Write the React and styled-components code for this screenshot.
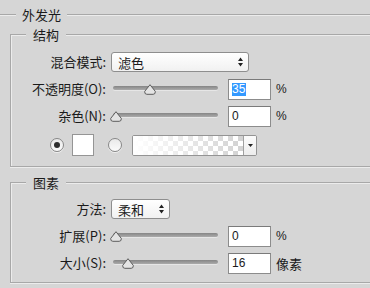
import styled, { createGlobalStyle } from "styled-components";

const BG = "#d6d6d6";
const DARK_LINE = "#a8a8a8";
const LIGHT_LINE = "#ececec";

const GlobalStyle = createGlobalStyle`
    html, body {
        margin: 0;
        padding: 0;
        background: ${BG};
        overflow: hidden;
    }
    #root {
        width: 370px;
        height: 288px;
        overflow: hidden;
        font-family: "Noto Sans CJK SC", "Liberation Sans", sans-serif;
        color: #1a1a1a;
    }
`;

// outer group: its left and bottom edges lie outside the window
const OuterGroup = styled.fieldset`
    margin: 6px 0 0 -2px;
    padding: 3px 0 40px 11px;
    width: 440px;
    min-width: 0;
    border: 1px solid ${DARK_LINE};
    box-shadow: inset 1px 1px 0 ${LIGHT_LINE};
`;

const Group = styled.fieldset`
    margin: ${(p) => p.$top || 0}px 0 0 0;
    padding: 0;
    width: 420px;
    min-width: 0;
    border: 1px solid ${DARK_LINE};
    box-shadow: inset 1px 1px 0 ${LIGHT_LINE}, 0 1px 0 ${LIGHT_LINE};
`;

const Rows = styled.div`
    display: flex;
    flex-direction: column;
    gap: 7px;
    padding: ${(p) => p.$padTop}px 0 ${(p) => p.$padBottom}px 0;
`;

const Legend = styled.legend`
    margin-left: ${(p) => p.$offset}px;
    padding: 0 ${(p) => p.$pad}px;
    font-size: 13px;
    line-height: 17px;
    height: 17px;
    background: ${BG};
`;

const Row = styled.div`
    display: flex;
    align-items: center;
    height: ${(p) => p.$h || 20}px;
    margin-top: ${(p) => p.$mt || 0}px;
`;

const Label = styled.div`
    width: 95px;
    flex-shrink: 0;
    text-align: right;
    font-size: 13px;
    line-height: 20px;
    white-space: nowrap;
`;

const Select = styled.div`
    box-sizing: border-box;
    margin-left: 5px;
    width: ${(p) => p.$w}px;
    height: 20px;
    border: 1px solid #8e8e8e;
    border-radius: 3px;
    background: linear-gradient(#ffffff, #f1f1f1);
    display: flex;
    align-items: center;
    justify-content: space-between;
    padding: 0 5px 0 6px;
    font-size: 13px;
`;

const SliderWrap = styled.div`
    position: relative;
    margin-left: 7px;
    width: 105px;
    height: 20px;
    flex-shrink: 0;
`;

const Track = styled.div`
    margin-top: 7px;
    height: 4px;
    border-radius: 2px;
    background: linear-gradient(#858585, #ababab);
    box-shadow: 0 1px 0 #e6e6e6;
`;

const Thumb = styled.svg`
    position: absolute;
    top: 5px;
    width: 12px;
    height: 11px;
`;

const Field = styled.div`
    box-sizing: border-box;
    margin-left: 10px;
    width: 43px;
    height: 21px;
    border: 1px solid #8c8c8c;
    border-top-color: #7a7a7a;
    background: #fff;
    padding: 0 3px;
    display: flex;
    align-items: center;
    font-family: "Liberation Sans", "DejaVu Sans", sans-serif;
    font-size: 12px;
`;

const Selected = styled.span`
    background: #3399ff;
    color: #fff;
    line-height: 13px;
    padding: 0 1px 0 0;
`;

const Unit = styled.div`
    margin-left: 5px;
    font-size: ${(p) => (p.$cjk ? 13 : 12)}px;
    font-family: ${(p) =>
        p.$cjk ? '"Noto Sans CJK SC", sans-serif' : '"Liberation Sans", sans-serif'};
`;

const Radio = styled.div`
    box-sizing: border-box;
    margin-left: ${(p) => p.$ml}px;
    width: 14px;
    height: 14px;
    border-radius: 50%;
    border: 1px solid #878787;
    background: linear-gradient(#e9e9e9, #fbfbfb);
    box-shadow: 0 1px 0 #efefef;
    display: flex;
    align-items: center;
    justify-content: center;

    &::after {
        content: '';
        width: 6px;
        height: 6px;
        border-radius: 50%;
        background: ${(p) => (p.$checked ? "#2e2e2e" : "transparent")};
    }
`;

const Swatch = styled.div`
    box-sizing: border-box;
    margin-left: 8px;
    width: 22px;
    height: 22px;
    border: 1px solid #959595;
    background: #fff;
`;

const GradientBox = styled.div`
    box-sizing: border-box;
    margin-left: 10px;
    width: 125px;
    height: 21px;
    border: 1px solid #949494;
    border-radius: 2px;
    display: flex;
    overflow: hidden;
    background: #f2f2f2;
`;

const GradientFill = styled.div`
    flex: 1;
    background:
        linear-gradient(to right, #fff 0%, rgba(255, 255, 255, 0.55) 45%, rgba(255, 255, 255, 0) 100%),
        conic-gradient(#d2d2d2 25%, #fff 0 50%, #d2d2d2 0 75%, #fff 0) 0 0 / 10px 10px;
`;

const DropButton = styled.div`
    width: 12px;
    border-left: 1px solid #a0a0a0;
    background: linear-gradient(#fbfbfb, #ededed);
    display: flex;
    align-items: center;
    justify-content: center;
`;

const UpDown = () => (
    <svg width="5" height="10" viewBox="0 0 5 10">
        <path d="M2.5 0.5 L5 4 L0 4 Z M0 6 L5 6 L2.5 9.5 Z" fill="#222" />
    </svg>
);

const Slider = ({ pos }) => (
    <SliderWrap>
        <Track />
        <Thumb viewBox="0 0 12 11" style={{ left: `${pos - 6}px` }}>
            <path
                d="M6 0.7 L11.3 7.4 Q11.6 10.3 9.2 10.3 L2.8 10.3 Q0.4 10.3 0.7 7.4 Z"
                fill="#e4e4e4"
                stroke="#5c5c5c"
                strokeWidth="1"
            />
        </Thumb>
    </SliderWrap>
);

const SliderRow = ({ label, pos, value, unit, selected, cjkUnit }) => (
    <Row>
        <Label>{label}</Label>
        <Slider pos={pos} />
        <Field>{selected ? <Selected>{value}</Selected> : value}</Field>
        <Unit $cjk={cjkUnit}>{unit}</Unit>
    </Row>
);

export default function App() {
    return (
        <>
            <GlobalStyle />
            <OuterGroup>
                <Legend $offset={6} $pad={6}>外发光</Legend>
                <Group>
                    <Legend $offset={15} $pad={7}>结构</Legend>
                    <Rows $padTop={9} $padBottom={10}>
                        <Row>
                            <Label>混合模式:</Label>
                            <Select $w={138}>
                                <span>滤色</span>
                                <UpDown />
                            </Select>
                        </Row>
                        <SliderRow label="不透明度(O):" pos={37} value="35" unit="%" selected />
                        <SliderRow label="杂色(N):" pos={3} value="0" unit="%" />
                        <Row $h={22} $mt={1}>
                            <Radio $ml={39} $checked />
                            <Swatch />
                            <Radio $ml={14} />
                            <GradientBox>
                                <GradientFill />
                                <DropButton>
                                    <svg width="5" height="3" viewBox="0 0 5 3">
                                        <path d="M0 0 L5 0 L2.5 3 Z" fill="#222" />
                                    </svg>
                                </DropButton>
                            </GradientBox>
                        </Row>
                    </Rows>
                </Group>
                <Group $top={7}>
                    <Legend $offset={15} $pad={7}>图素</Legend>
                    <Rows $padTop={8} $padBottom={9}>
                        <Row>
                            <Label>方法:</Label>
                            <Select $w={59}>
                                <span>柔和</span>
                                <UpDown />
                            </Select>
                        </Row>
                        <SliderRow label="扩展(P):" pos={3} value="0" unit="%" />
                        <SliderRow label="大小(S):" pos={15} value="16" unit="像素" cjkUnit />
                    </Rows>
                </Group>
            </OuterGroup>
        </>
    );
}
